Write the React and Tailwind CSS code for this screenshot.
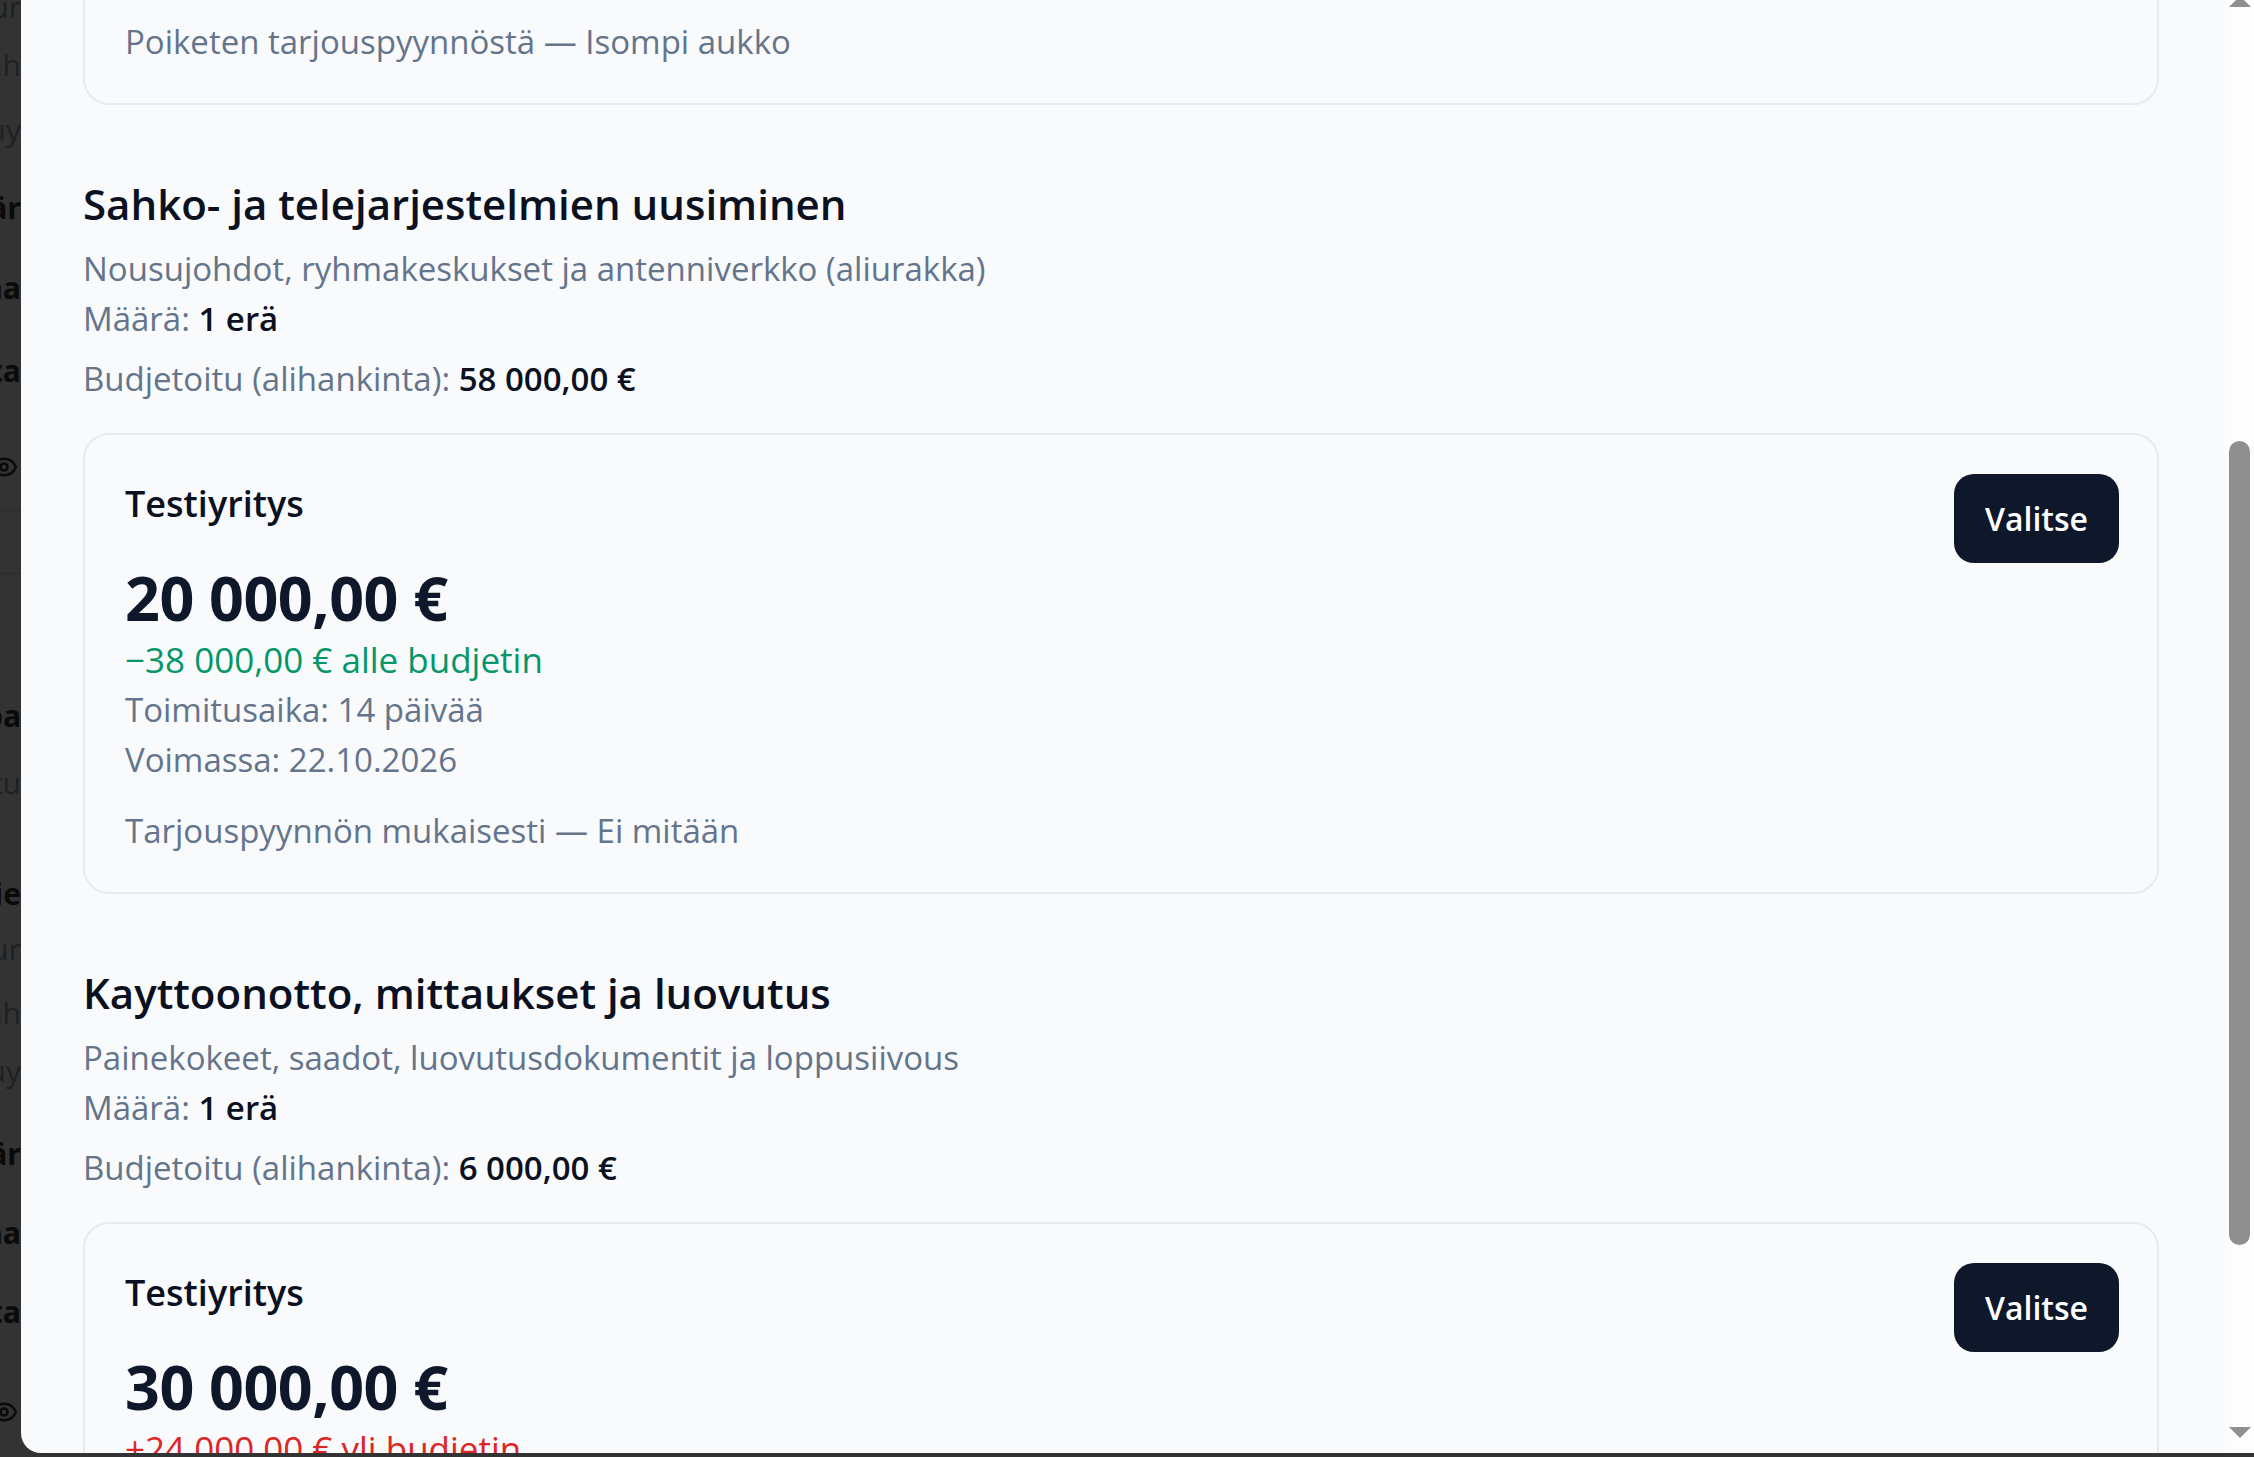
import { Eye } from 'lucide-react';

const Strip = () => (
  <div className="w-[21px] h-full shrink-0 overflow-hidden bg-[#333333] text-[30px] leading-[40px] font-['Open_Sans',sans-serif]">
    <div className="flex justify-end whitespace-nowrap mt-[-13px] text-[#1d2024]">ur</div>
    <div className="flex justify-end whitespace-nowrap mt-[18px] text-[#1d2024]">nh</div>
    <div className="flex justify-end whitespace-nowrap mt-[25px] text-[#1d2024]">uy</div>
    <div className="flex justify-end whitespace-nowrap mt-[38px] font-bold text-[#0a0a0a]">är</div>
    <div className="flex justify-end whitespace-nowrap mt-[40px] font-bold text-[#0a0a0a]">na</div>
    <div className="flex justify-end whitespace-nowrap mt-[43px] font-bold text-[#0a0a0a]">ta</div>
    <div className="flex justify-end mt-[56px] h-[40px] items-center pr-[3px] text-[#0a0a0a]">
      <Eye size={28} strokeWidth={2.2} className="shrink-0" />
    </div>
    <div className="mt-[23px] h-px bg-[#2b2b2b]" />
    <div className="mt-[62px] h-px bg-[#2b2b2b]" />
    <div className="flex justify-end whitespace-nowrap mt-[122px] font-bold text-[#0a0a0a]">pa</div>
    <div className="flex justify-end whitespace-nowrap mt-[27px] text-[#1d2024]">tu</div>
    <div className="flex justify-end whitespace-nowrap mt-[71px] font-bold text-[#0a0a0a]">ie</div>
    <div className="flex justify-end whitespace-nowrap mt-[15px] text-[#1d2024]">ur</div>
    <div className="flex justify-end whitespace-nowrap mt-[24px] text-[#1d2024]">nh</div>
    <div className="flex justify-end whitespace-nowrap mt-[18px] text-[#1d2024]">uy</div>
    <div className="flex justify-end whitespace-nowrap mt-[43px] font-bold text-[#0a0a0a]">är</div>
    <div className="flex justify-end whitespace-nowrap mt-[39px] font-bold text-[#0a0a0a]">na</div>
    <div className="flex justify-end whitespace-nowrap mt-[39px] font-bold text-[#0a0a0a]">ta</div>
    <div className="flex justify-end mt-[60px] h-[40px] items-center pr-[3px] text-[#0a0a0a]">
      <Eye size={28} strokeWidth={2.2} className="shrink-0" />
    </div>
  </div>
);

const Scrollbar = () => (
  <div className="w-[29px] shrink-0 h-full bg-[#fdfdfd] flex flex-col items-center">
    <div className="mt-[-4px] w-0 h-0 border-l-[11px] border-r-[11px] border-b-[11px] border-l-transparent border-r-transparent border-b-[#8f8f8f]" />
    <div className="mt-[434px] w-[21px] h-[804px] rounded-full bg-[#8f8f8f]" />
    <div className="mt-[182px] w-0 h-0 border-l-[11px] border-r-[11px] border-t-[11px] border-l-transparent border-r-transparent border-t-[#8f8f8f]" />
  </div>
);

const Offer = ({ price, diff, over, children }) => (
  <div className="border-2 border-[#e6ebf1] rounded-[26px] bg-[#f8fafc] pt-[39px] pb-[36px] pl-[40px] pr-[38px] flex justify-between items-start">
    <div className="flex flex-col">
      <div className="text-[36px] leading-[60px] font-semibold text-[#0b1120]">Testiyritys</div>
      <div className="mt-[26px] text-[61px] leading-[75px] font-bold text-[#0f172a] tracking-[-0.5px]">{price}</div>
      <div className={over ? 'text-[35px] leading-[50px] font-medium text-[#dc2626]' : 'text-[35px] leading-[50px] font-medium text-[#059669]'}>{diff}</div>
      {children}
    </div>
    <button className="h-[89px] px-[31px] rounded-[20px] bg-[#0f172a] text-white text-[32px] font-semibold">Valitse</button>
  </div>
);

const Section = ({ title, desc, budget, children }) => (
  <div className="mt-[69px]">
    <h2 className="text-[42px] leading-[60px] font-semibold text-[#0b1120]">{title}</h2>
    <p className="mt-[10px] text-[33px] leading-[50px] text-[#64748b]">{desc}</p>
    <p className="text-[33px] leading-[50px] text-[#64748b]">Määrä: <span className="font-semibold text-[#0b1120]">1 erä</span></p>
    <p className="mt-[10px] text-[33px] leading-[50px] text-[#64748b]">Budjetoitu (alihankinta): <span className="font-semibold text-[#0b1120]">{budget}</span></p>
    <div className="mt-[29px]">{children}</div>
  </div>
);

export default function App() {
  return (
    <div className="h-screen w-full flex items-start overflow-hidden bg-[#333333] font-['Open_Sans',sans-serif]">
      <Strip />
      <div className="flex-1 h-[1453px] flex bg-[#f8fafc] rounded-bl-[20px] overflow-hidden">
        <div className="flex-1 overflow-hidden pl-[62px] pr-[66px]">
          <div className="mt-[-60px] border-2 border-[#e6ebf1] rounded-[26px] pt-[75px] pb-[36px] px-[40px]">
            <p className="text-[33px] leading-[50px] text-[#64748b]">Poiketen tarjouspyynnöstä — Isompi aukko</p>
          </div>

          <Section
            title="Sahko- ja telejarjestelmien uusiminen"
            desc="Nousujohdot, ryhmakeskukset ja antenniverkko (aliurakka)"
            budget="58 000,00 €"
          >
            <Offer price="20 000,00 €" diff="−38 000,00 € alle budjetin">
              <p className="text-[33px] leading-[50px] text-[#64748b]">Toimitusaika: 14 päivää</p>
              <p className="text-[33px] leading-[50px] text-[#64748b]">Voimassa: 22.10.2026</p>
              <p className="mt-[21px] text-[33px] leading-[50px] text-[#64748b]">Tarjouspyynnön mukaisesti — Ei mitään</p>
            </Offer>
          </Section>

          <Section
            title="Kayttoonotto, mittaukset ja luovutus"
            desc="Painekokeet, saadot, luovutusdokumentit ja loppusiivous"
            budget="6 000,00 €"
          >
            <Offer price="30 000,00 €" diff="+24 000,00 € yli budjetin" over>
              <p className="text-[33px] leading-[50px] text-[#64748b]">Toimitusaika: 14 päivää</p>
              <p className="text-[33px] leading-[50px] text-[#64748b]">Voimassa: 22.10.2026</p>
            </Offer>
          </Section>
        </div>
        <Scrollbar />
      </div>
    </div>
  );
}
